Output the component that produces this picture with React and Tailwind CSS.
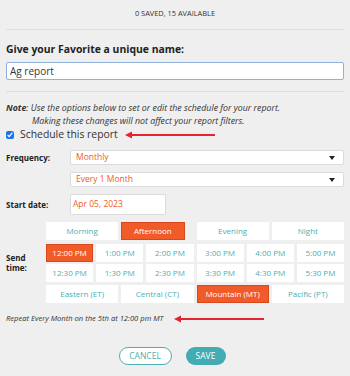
import { useState } from 'react';

const times1 = ['12:00 PM', '1:00 PM', '2:00 PM', '3:00 PM', '4:00 PM', '5:00 PM'];
const times2 = ['12:30 PM', '1:30 PM', '2:30 PM', '3:30 PM', '4:30 PM', '5:30 PM'];
const parts = ['Morning', 'Afternoon', 'Evening', 'Night'];
const zones = ['Eastern (ET)', 'Central (CT)', 'Mountain (MT)', 'Pacific (PT)'];

function Arrow({ w }) {
  return (
    <svg width={w} height="8" viewBox={`0 0 ${w} 8`} className="block">
      <line x1="5" y1="4" x2={w} y2="4" stroke="#e42431" strokeWidth="2" />
      <polygon points="0,4 7,0.5 7,7.5" fill="#e42431" />
    </svg>
  );
}

function Cell({ label, active, className = '' }) {
  return (
    <div
      className={`h-[18px] flex items-center justify-center text-[8px] ${
        active ? 'bg-[#f15a29] text-white border border-[#d9481c]' : 'bg-white text-[#4aafb5]'
      } ${className}`}
    >
      {label}
    </div>
  );
}

function Caret() {
  return <span className="ml-auto mr-[8px] w-0 h-0 border-l-[3.5px] border-r-[3.5px] border-t-[4px] border-l-transparent border-r-transparent border-t-[#222]" />;
}

export default function App() {
  const [name, setName] = useState('Ag report');
  return (
    <div className="w-[350px] h-[376px] bg-[#efefef] font-['Open_Sans',sans-serif] text-[#222] px-[6px] overflow-hidden">
      <div className="pt-[8px] h-[30px] text-center text-[7.4px] text-[#333] border-b border-[#dedede]">
        0 SAVED, 15 AVAILABLE
      </div>
      <h2 className="mt-[11px] text-[10.4px] font-bold leading-[16px]">Give your Favorite a unique name:</h2>
      <input
        value={name}
        onChange={(e) => setName(e.target.value)}
        className="mt-[3px] w-full h-[18px] bg-white border border-[#8fb0db] rounded-[2px] px-[3px] text-[10px] text-[#333] outline-none"
      />
      <div className="mt-[10px] border-b border-[#dedede]" />

      <div className="mt-[10px] text-[8.8px] italic leading-[13px] text-[#333]">
        <p><b>Note</b>: Use the options below to set or edit the schedule for your report.</p>
        <p className="pl-[26px]">Making these changes will not affect your report filters.</p>
      </div>
      <label className="flex items-center h-[14px]">
        <input type="checkbox" defaultChecked className="w-[8px] h-[8px] m-0 accent-[#1a73e8]" />
        <span className="ml-[6px] text-[10.4px] text-[#333]">Schedule this report</span>
        <span className="ml-[7px]"><Arrow w={90} /></span>
      </label>

      <div className="mt-[8px] flex items-center">
        <span className="w-[64px] text-[8px] font-bold">Frequency:</span>
        <div className="flex-1 h-[15px] bg-white border border-[#dcdcdc] rounded-[2px] flex items-center pl-[5px] text-[8.5px] text-[#f15a29]">
          Monthly<Caret />
        </div>
      </div>
      <div className="mt-[7px] ml-[64px] h-[15px] bg-white border border-[#dcdcdc] rounded-[2px] flex items-center pl-[5px] text-[8.5px] text-[#f15a29]">
        Every 1 Month<Caret />
      </div>
      <div className="mt-[7px] flex items-center">
        <span className="w-[64px] text-[8px] font-bold">Start date:</span>
        <div className="w-[96px] h-[21px] bg-white border border-[#dcdcdc] rounded-[2px] flex items-center pl-[2px] text-[8.5px] text-[#f15a29]">
          Apr 05, 2023
        </div>
      </div>

      <div className="mt-[7px] ml-[40px] grid grid-cols-4 gap-[3px]">
        {parts.map((p) => (
          <Cell key={p} label={p} active={p === 'Afternoon'} className={p === 'Afternoon' ? 'mr-[9px]' : ''} />
        ))}
      </div>
      <div className="mt-[4px] flex items-center">
        <span className="w-[40px] text-[8px] font-bold leading-[10px]">Send<br />time:</span>
        <div className="flex-1 grid grid-cols-6 gap-x-[3px] gap-y-[2px]">
          {times1.map((t) => <Cell key={t} label={t} active={t === '12:00 PM'} />)}
          {times2.map((t) => <Cell key={t} label={t} />)}
        </div>
      </div>
      <div className="mt-[3px] ml-[40px] grid grid-cols-4 gap-[3px]">
        {zones.map((z) => <Cell key={z} label={z} active={z === 'Mountain (MT)'} />)}
      </div>

      <div className="mt-[12px] flex items-center h-[8px]">
        <span className="text-[7.6px] italic text-[#333]">Repeat Every Month on the 5th at 12:00 pm MT</span>
        <span className="ml-[11px]"><Arrow w={90} /></span>
      </div>

      <div className="mt-[24px] flex justify-center gap-[14px] pr-[6px]">
        <button className="w-[53px] h-[18px] rounded-full bg-white border border-[#4aafb5] text-[#4aafb5] text-[8.5px] flex items-center justify-center">CANCEL</button>
        <button className="w-[40px] h-[18px] rounded-full bg-[#43abb2] text-white text-[8.5px] flex items-center justify-center">SAVE</button>
      </div>
    </div>
  );
}
